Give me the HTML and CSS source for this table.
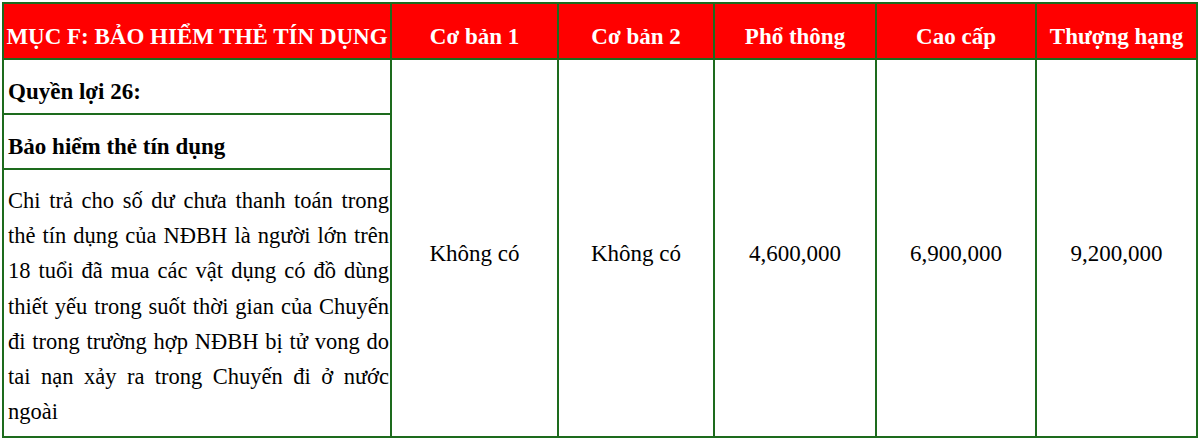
FILE: index.html
```html
<!DOCTYPE html>
<html lang="vi">
<head>
<meta charset="utf-8">
<title>Mục F: Bảo hiểm thẻ tín dụng</title>
<link rel="stylesheet" href="styles.css">
</head>
<body>
<table class="benefits">
  <colgroup>
    <col class="c-desc">
    <col class="c1">
    <col class="c2">
    <col class="c3">
    <col class="c4">
    <col class="c5">
  </colgroup>
  <thead>
    <tr>
      <th class="head">MỤC F: BẢO HIỂM THẺ TÍN DỤNG</th>
      <th class="head">Cơ bản 1</th>
      <th class="head">Cơ bản 2</th>
      <th class="head">Phổ thông</th>
      <th class="head">Cao cấp</th>
      <th class="head">Thượng hạng</th>
    </tr>
  </thead>
  <tbody>
    <tr class="r-title">
      <td class="label">Quyền lợi 26:</td>
      <td class="value" rowspan="3">Không có</td>
      <td class="value" rowspan="3">Không có</td>
      <td class="value" rowspan="3">4,600,000</td>
      <td class="value" rowspan="3">6,900,000</td>
      <td class="value" rowspan="3">9,200,000</td>
    </tr>
    <tr class="r-name">
      <td class="label">Bảo hiểm thẻ tín dụng</td>
    </tr>
    <tr class="r-text">
      <td class="text">Chi trả cho số dư chưa thanh toán trong thẻ tín dụng của NĐBH là người lớn trên 18 tuổi đã mua các vật dụng có đồ dùng thiết yếu trong suốt thời gian của Chuyến đi trong trường hợp NĐBH bị tử vong do tai nạn xảy ra trong Chuyến đi ở nước ngoài</td>
    </tr>
  </tbody>
</table>
</body>
</html>
```

FILE: styles.css
```css
html, body {
  margin: 0;
  padding: 0;
  background: #ffffff;
}

body {
  padding: 2px 0 0 2px;
  color: #000000;
}

.benefits {
  border-collapse: collapse;
  table-layout: fixed;
  width: 1196px;
}

.c-desc { width: 388px; }
.c1 { width: 167px; }
.c2 { width: 156px; }
.c3 { width: 162px; }
.c4 { width: 160px; }
.c5 { width: 161px; }

.benefits th,
.benefits td {
  border: 2px solid #1d6b1d;
  font-family: "Liberation Serif", "DejaVu Serif", serif;
}

.head {
  background: #ff0000;
  color: #ffffff;
  font-size: 23px;
  font-weight: bold;
  line-height: 26px;
  height: 26px;
  padding: 20px 1px 8px;
  text-align: center;
  white-space: nowrap;
}

.label {
  font-size: 23px;
  font-weight: bold;
  line-height: 26px;
  height: 26px;
  padding: 19px 3px 8px 4px;
  vertical-align: bottom;
  text-align: left;
}

.text {
  font-size: 22.5px;
  line-height: 35.2px;
  padding: 13px 1px 7px 4px;
  text-align: justify;
  vertical-align: top;
}

.value {
  font-size: 23px;
  line-height: 26px;
  text-align: center;
  vertical-align: middle;
  padding: 12px 4px 0;
}
```
